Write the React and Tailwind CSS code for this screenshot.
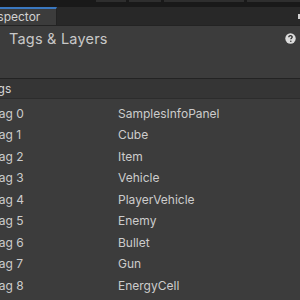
import React from 'react';

const tags = [
  'SamplesInfoPanel',
  'Cube',
  'Item',
  'Vehicle',
  'PlayerVehicle',
  'Enemy',
  'Bullet',
  'Gun',
  'EnergyCell',
];

const HelpIcon = () => (
  <svg width="11" height="11" viewBox="0 0 11 11" className="shrink-0">
    <circle cx="5.5" cy="5.5" r="5.2" fill="#dcdcdc" />
    <path
      d="M3.8 4.2c0-1 .8-1.6 1.7-1.6s1.7.6 1.7 1.5c0 1.1-1.4 1.1-1.4 2.2"
      fill="none"
      stroke="#2a2a2a"
      strokeWidth="1.3"
    />
    <circle cx="5.8" cy="8.3" r="0.75" fill="#2a2a2a" />
  </svg>
);

export default function App() {
  return (
    <div
      className="w-[300px] h-[300px] overflow-hidden bg-[#3c3c3c] text-[#c8c8c8] flex flex-col"
      style={{ fontFamily: 'Inter, "Noto Sans", sans-serif' }}
    >
      {/* top toolbar strip */}
      <div className="h-[7px] bg-[#191919] flex items-start gap-[3px] pl-[96px] shrink-0">
        <div className="w-[30px] h-[2px] bg-[#2e2e2e]" />
        <div className="w-[32px] h-[2px] bg-[#2e2e2e]" />
        <div className="w-[80px] h-[2px] bg-[#2e2e2e]" />
        <div className="flex-1 h-[2px] bg-[#2e2e2e]" />
      </div>

      {/* tab bar */}
      <div className="h-[19px] bg-[#282828] flex items-stretch shrink-0 border-b border-[#232323]">
        <div className="w-[57px] bg-[#3c3c3c] border-t-2 border-[#3a78c0] border-r border-r-[#232323] flex items-center overflow-hidden">
          <span className="text-[12px] text-[#d2d2d2] ml-[-13px] whitespace-nowrap leading-none">Inspector</span>
        </div>
        <div className="flex-1" />
        <div className="w-[2px] h-[5px] bg-[#d0d0d0] self-center" />
      </div>

      {/* header */}
      <div className="h-[52px] flex items-start justify-between pl-[9px] pr-[4px] pt-[4px] shrink-0">
        <span className="text-[14.5px] text-[#c8c8c8] leading-[17px] tracking-[0.2px]">Tags &amp; Layers</span>
        <div className="mt-[3px]">
          <HelpIcon />
        </div>
      </div>

      {/* foldout header */}
      <div className="h-[21px] bg-[#353535] border-t border-[#232323] border-b border-b-[#2c2c2c] flex items-center shrink-0">
        <span className="text-[12px] text-[#d6d6d6] ml-[-16px] leading-none">Tags</span>
      </div>

      {/* rows */}
      <div className="flex flex-col pt-[4px]">
        {tags.map((name, i) => (
          <div key={i} className="h-[21.5px] flex items-center text-[12px] text-[#cccccc] shrink-0">
            <span className="w-[126px] ml-[-8px] whitespace-nowrap">Tag {i}</span>
            <span className="whitespace-nowrap">{name}</span>
          </div>
        ))}
      </div>
    </div>
  );
}
